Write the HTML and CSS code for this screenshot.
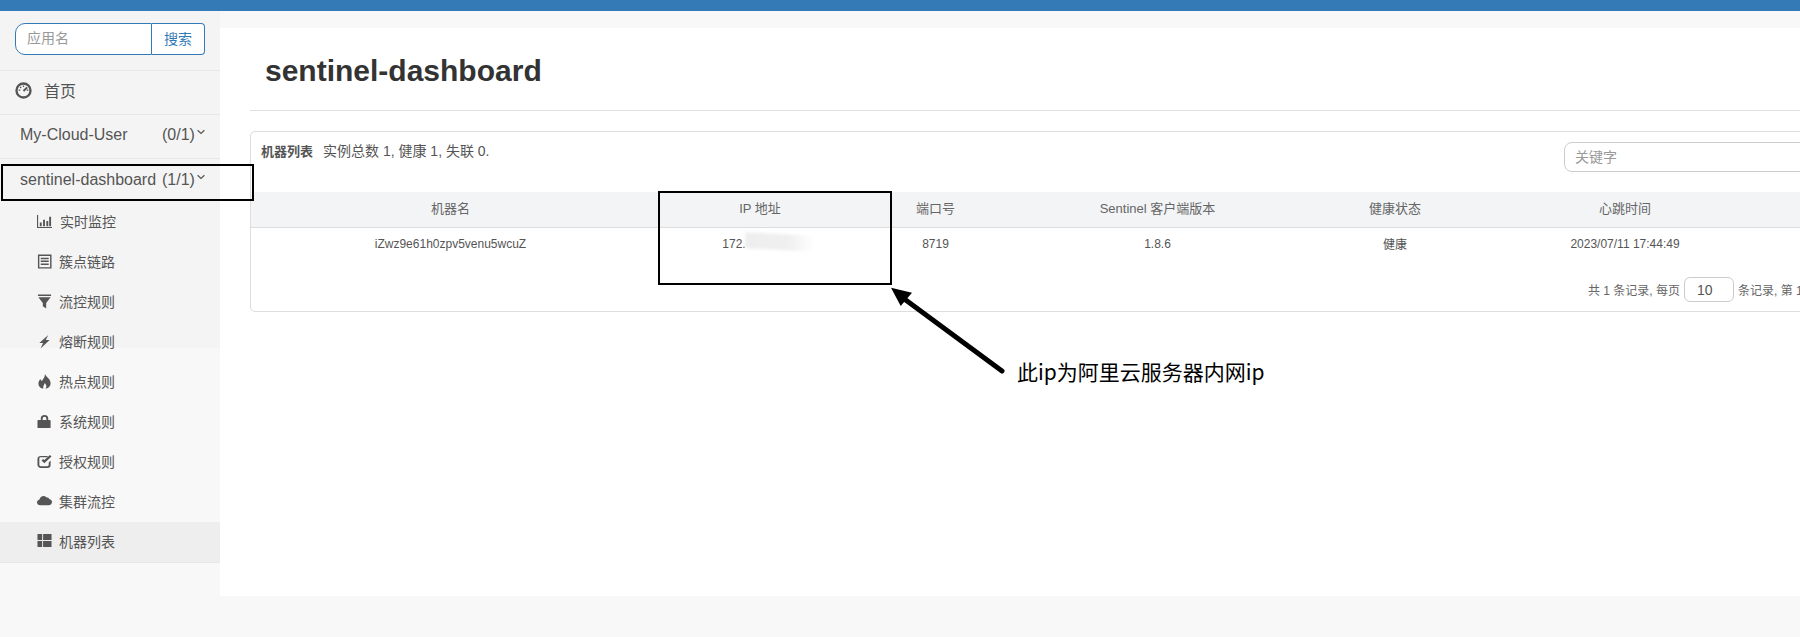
FILE: index.html
```html
<!DOCTYPE html>
<html lang="zh-CN">
<head>
<meta charset="utf-8">
<title>sentinel-dashboard</title>
<link rel="stylesheet" href="styles.css">
</head>
<body>
<header class="topbar"></header>
<div class="layout">
  <aside class="sidebar">
    <form class="search">
      <input class="search-input" placeholder="应用名">
      <button class="search-btn" type="button">搜索</button>
    </form>
    <nav>
      <a class="home"><svg class="home-icon" viewBox="0 0 16 16"><circle cx="8" cy="8" r="6.6" fill="none" stroke="currentColor" stroke-width="2.200"/><path d="M8 8.500 11.500 5" stroke="currentColor" stroke-width="1.800" fill="none"/><path d="M8 3.200v1.600M3.400 7.600H5M12.600 7.600H11M4.800 4.600l1 1" stroke="currentColor" stroke-width="1.200" fill="none"/></svg>首页</a>
      <a class="app"><span class="app-name">My-Cloud-User</span><span class="app-count">(0/1)</span><svg class="chev" viewBox="0 0 8 6"><path d="M.6 1.200 4 4.400 7.400 1.200" fill="none" stroke="currentColor" stroke-width="1.200"/></svg></a>
      <a class="app app-open"><span class="app-name">sentinel-dashboard</span><span class="app-count">(1/1)</span><svg class="chev" viewBox="0 0 8 6"><path d="M.6 1.200 4 4.400 7.400 1.200" fill="none" stroke="currentColor" stroke-width="1.200"/></svg></a>
      <ul class="submenu">
        <li><svg class="icon" viewBox="0 0 16 16"><path d="M0 1h1.200v12.800H16V15H0z M3 9h2v4H3z M6.500 6h2v7h-2z M10 7.500h2V13h-2z M13 3h2v10h-2z" fill="currentColor"/></svg><span class="label-shift">实时监控</span></li>
        <li><svg class="icon" viewBox="0 0 16 16"><path fill-rule="evenodd" d="M1 .5h14.500v15H1z M2.500 2v12h11.500V2z M4 4h8.500v1.600H4z M4 7h8.500v1.600H4z M4 10h8.500v1.600H4z" fill="currentColor"/></svg>簇点链路</li>
        <li><svg class="icon" viewBox="0 0 16 16"><path d="M1 .5h14V2H1z M1.500 3.500h13L9.800 9.500V15.500L6.200 13V9.500z" fill="currentColor"/></svg>流控规则</li>
        <li><svg class="icon" viewBox="0 0 16 16"><path d="M12 1 2.500 9.500h4L3.800 15.500 13.500 6.500H9.300z" fill="currentColor"/></svg>熔断规则</li>
        <li><svg class="icon" viewBox="0 0 16 16"><path d="M8.500 0C9.500 3 14.500 5 14.500 10c0 3-2.800 5.500-5.500 5.500 1.500-1.500 1.500-3.500-.7-6-.5 1.800-2.200 3-1.500 6C4 15.500 1.500 13 1.500 10c0-2 1.200-3 2-4.700.5 1 1 1.500 1.700 2.200C6.500 5.500 8.500 3.500 8.500 0z" fill="currentColor"/></svg>热点规则</li>
        <li><svg class="icon" viewBox="0 0 16 16"><path fill-rule="evenodd" d="M4 6.500V5a4 4 0 0 1 8 0v1.500h1.500c.5 0 1 .5 1 1V14c0 .5-.5 1-1 1h-12c-.5 0-1-.5-1-1V7.500c0-.5.5-1 1-1z M6 6.500h4V5a2 2 0 0 0-4 0z" fill="currentColor"/></svg>系统规则</li>
        <li><svg class="icon" viewBox="0 0 16 16"><path d="M12.500 9v2.500c0 1-.6 1.500-1.500 1.500H4c-1 0-1.500-.5-1.500-1.500V5C2.500 4 3 3.500 4 3.500h6.500L12 2H4C2 2 .5 3.300.5 5v6.500C.5 13.500 2.300 15 4 15h7.500c1.700 0 3-1.400 3-3V7z" fill="currentColor"/><path d="M4.800 6.800 7.800 9.800 15.500 2.600 13.800 1 7.800 6.500 6.500 5.200z" fill="currentColor"/></svg>授权规则</li>
        <li><svg class="icon" viewBox="0 0 16 16"><path d="M3.500 12C1.500 12 0 10.700 0 9c0-1.500 1-2.700 2.500-3C3 3.700 5 2 7 2c1.500 0 2.800.8 3.500 2 .5-.3 1-.3 1.500 0 .5.200.9.700 1 1.300 1.700.3 3 1.800 3 3.200 0 1.900-1.500 3.500-3.500 3.500z" fill="currentColor"/></svg>集群流控</li>
        <li class="active"><svg class="icon" viewBox="0 0 16 16"><path d="M.5 1h5v6.500h-5z M.5 8.500h5V15h-5z M6.500 1h9v6.500h-9z M6.500 8.500h9V15h-9z" fill="currentColor"/></svg>机器列表</li>
      </ul>
    </nav>
  </aside>
  <main class="main">
    <h1 class="title">sentinel-dashboard</h1>
    <section class="card">
      <div class="card-head">
        <div class="summary"><strong>机器列表</strong><span class="summary-text">实例总数 1, 健康 1, 失联 0.</span></div>
        <input class="keyword" placeholder="关键字">
      </div>
      <table class="machines">
        <colgroup><col class="c-host"><col class="c-ip"><col class="c-port"><col class="c-ver"><col class="c-state"><col class="c-beat"><col></colgroup>
        <thead><tr><th>机器名</th><th>IP 地址</th><th>端口号</th><th>Sentinel 客户端版本</th><th>健康状态</th><th>心跳时间</th><th></th></tr></thead>
        <tbody><tr><td>iZwz9e61h0zpv5venu5wcuZ</td><td><span class="masked">172.<i class="smear"></i></span></td><td>8719</td><td>1.8.6</td><td>健康</td><td>2023/07/11 17:44:49</td><td></td></tr></tbody>
      </table>
      <div class="pager">共 1 条记录, 每页<input class="page-size" value="10">条记录, 第 1 / 1 页</div>
    </section>
  </main>
</div>
<div class="mark mark-app"></div>
<div class="mark mark-ip"></div>
<svg class="arrow" viewBox="0 0 130 100"><path d="M113 86 14 13" stroke="#000" stroke-width="5" stroke-linecap="round" fill="none"/><path d="M2 2.700 23 7.700 11.700 21z" fill="#000"/></svg>
<p class="note">此ip为阿里云服务器内网ip</p>
</body>
</html>
```
FILE: styles.css
```css
* { box-sizing: border-box; }
html, body { margin: 0; height: 637px; overflow: hidden; }
body {
  position: relative;
  background: #f8f8f8;
  color: #555;
  font-family: "Liberation Sans", "Noto Sans CJK SC", sans-serif;
  font-size: 12px;
}
.topbar { height: 11px; background: #337ab7; }
.layout { display: flex; height: 626px; }

/* sidebar */
.sidebar {
  flex: 0 0 220px;
  background: linear-gradient(#f4f4f4 337px, #f8f8f8 337px);
}
.search { display: flex; margin: 12px 15px 0; height: 32px; }
.search-input {
  width: 137px;
  border: 1px solid #337ab7;
  border-radius: 10px 0 0 10px;
  padding: 0 11px 3px;
  font: 14px "Liberation Sans", "Noto Sans CJK SC", sans-serif;
  background: #fff;
  outline: 0;
}
.search-input::placeholder, .keyword::placeholder { color: #999; opacity: 1; }
.search-btn {
  width: 53px;
  border: 1px solid #337ab7;
  border-left: 0;
  border-radius: 0 4px 4px 0;
  background: #fff;
  color: #337ab7;
  padding: 0 0 2px;
  font: 14px "Liberation Sans", "Noto Sans CJK SC", sans-serif;
}
nav { display: block; margin-top: 15px; border-top: 1px solid #e7e7e7; }
.home, .app {
  display: flex;
  align-items: center;
  height: 44px;
  padding-bottom: 3px;
  border-bottom: 1px solid #e7e7e7;
  font-size: 16px;
  color: #555;
}
.home { padding-left: 15px; padding-bottom: 5px; }
.home-icon { width: 17px; height: 17px; margin-right: 12px; }
.app { padding-left: 20px; }
.app-open { border-bottom: 0; height: 43px; padding-bottom: 1px; }
.app-name { width: 142px; }
.chev { width: 8px; height: 6px; margin: -6px 0 0 2px; }
.submenu { list-style: none; margin: 0; padding: 0; }
.submenu li {
  display: flex;
  align-items: center;
  height: 40px;
  padding: 0 0 2px 37px;
  font-size: 14px;
}
.submenu li.active { height: 41px; padding-bottom: 3px; background: #eee; border-bottom: 1px solid #e7e7e7; }
.icon { flex: none; width: 15px; height: 15px; margin-right: 7px; color: #555; }
.label-shift { margin-left: 1px; }

/* main */
.main {
  flex: 0 0 1580px;
  height: 568px;
  margin-top: 17px;
  padding-left: 30px;
  background: #fff;
  overflow: hidden;
}
.title {
  width: 1700px;
  height: 83px;
  margin: 0;
  padding: 23px 0 0 15px;
  border-bottom: 1px solid #e0e0e0;
  font-size: 30px;
  line-height: 40px;
  color: #333;
}
.card {
  width: 1700px;
  height: 181px;
  margin-top: 20px;
  border: 1px solid #ddd;
  border-radius: 5px;
  background: #fff;
}
.card-head { position: relative; height: 60px; padding: 8px 10px; font-size: 13px; }
.summary strong { color: #555; }
.summary-text { margin-left: 10px; font-size: 14px; }
.keyword {
  position: absolute;
  left: 1313px;
  top: 10px;
  width: 300px;
  height: 30px;
  border: 1px solid #ccc;
  border-radius: 8px;
  padding: 0 10px 1px;
  font: 14px "Liberation Sans", "Noto Sans CJK SC", sans-serif;
}
.machines { table-layout: fixed; width: 1699px; border-collapse: collapse; }
.c-host { width: 399px; }
.c-ip { width: 220px; }
.c-port { width: 131px; }
.c-ver { width: 313px; }
.c-state { width: 162px; }
.c-beat { width: 298px; }
.machines th {
  height: 35px;
  background: #f3f4f6;
  border-bottom: 1px solid #ddd;
  font-size: 13px;
  font-weight: 400;
  color: #666;
  padding: 0 0 3px;
  text-align: center;
}
.machines td {
  height: 33px;
  padding: 0;
  text-align: center;
  font-size: 12px;
}
.masked { position: relative; display: inline-block; margin-right: 52px; }
.smear {
  position: absolute;
  left: 23px;
  top: -3px;
  width: 70px;
  height: 16px;
  background: linear-gradient(90deg, #eee, #efefef 60%, #fff);
  border-radius: 4px 30px 20px 6px;
  filter: blur(1.500px);
  transform: rotate(3deg);
}
.pager { display: flex; align-items: center; height: 25px; margin: 17px 0 0 1337px; white-space: nowrap; font-size: 12px; color: #666; }
.page-size {
  width: 50px;
  height: 25px;
  margin: 0 4px;
  border: 1px solid #ccc;
  border-radius: 6px;
  padding: 0 12px;
  font: 14px "Liberation Sans", sans-serif;
  color: #555;
}

/* annotations drawn on top of the screenshot */
.mark { position: absolute; border: 2px solid #000; }
.mark-app { left: 1px; top: 164px; width: 253px; height: 37px; }
.mark-ip { left: 658px; top: 191px; width: 234px; height: 94px; }
.arrow { position: absolute; left: 889px; top: 285px; width: 130px; height: 100px; }
.note {
  position: absolute;
  left: 1017px;
  top: 356px;
  margin: 0;
  font: 21px/30px "Noto Sans CJK SC", sans-serif;
  color: #000;
}
```
